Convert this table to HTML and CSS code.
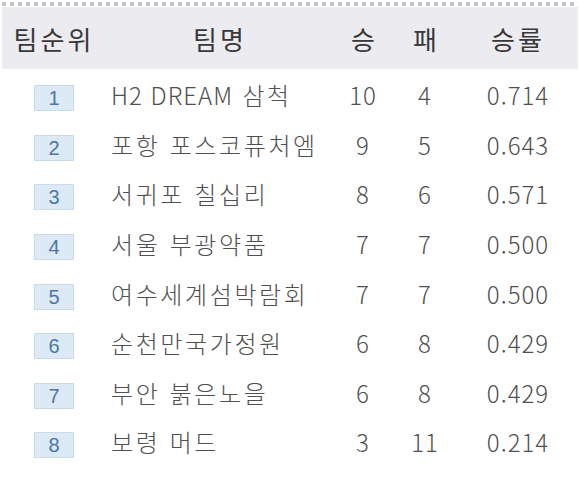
FILE: index.html
```html
<!DOCTYPE html>
<html lang="ko">
<head>
<meta charset="utf-8">
<link rel="stylesheet" href="styles.css">
</head>
<body>
<div class="wrap">
<table class="standings">
<colgroup>
<col class="c-rank"><col class="c-team"><col class="c-win"><col class="c-loss"><col class="c-pct">
</colgroup>
<thead>
<tr><th>팀순위</th><th>팀명</th><th>승</th><th>패</th><th>승률</th></tr>
</thead>
<tbody>
<tr><td><span class="badge">1</span></td><td class="team"><span class="latin">H2 DREAM</span> 삼척</td><td class="num">10</td><td class="num">4</td><td class="num">0.714</td></tr>
<tr><td><span class="badge">2</span></td><td class="team">포항 포스코퓨처엠</td><td class="num">9</td><td class="num">5</td><td class="num">0.643</td></tr>
<tr><td><span class="badge">3</span></td><td class="team">서귀포 칠십리</td><td class="num">8</td><td class="num">6</td><td class="num">0.571</td></tr>
<tr><td><span class="badge">4</span></td><td class="team">서울 부광약품</td><td class="num">7</td><td class="num">7</td><td class="num">0.500</td></tr>
<tr><td><span class="badge">5</span></td><td class="team">여수세계섬박람회</td><td class="num">7</td><td class="num">7</td><td class="num">0.500</td></tr>
<tr><td><span class="badge">6</span></td><td class="team">순천만국가정원</td><td class="num">6</td><td class="num">8</td><td class="num">0.429</td></tr>
<tr><td><span class="badge">7</span></td><td class="team">부안 붉은노을</td><td class="num">6</td><td class="num">8</td><td class="num">0.429</td></tr>
<tr><td><span class="badge">8</span></td><td class="team">보령 머드</td><td class="num">3</td><td class="num">11</td><td class="num">0.214</td></tr>
</tbody>
</table>
</div>
</body>
</html>
```
FILE: styles.css
```css
html, body {
  margin: 0;
  padding: 0;
  background: #ffffff;
}
.wrap {
  padding: 2px 2px 0 2px;
  width: 576px;
}
.wrap::before {
  content: "";
  display: block;
  height: 4px;
  background: repeating-linear-gradient(to right, #c4c4c8 0 4px, transparent 4px 8px);
}
.standings {
  width: 576px;
  border-collapse: collapse;
  table-layout: fixed;
  font-family: "Noto Sans CJK KR", "Noto Sans", sans-serif;
  font-weight: 300;
  color: #505050;
}
.c-rank { width: 104px; }
.c-team { width: 228px; }
.c-win { width: 58px; }
.c-loss { width: 66px; }
.c-pct { width: 120px; }
.standings th {
  height: 62px;
  padding: 0;
  background: #ececf0;
  font-size: 26px;
  letter-spacing: 3px;
  font-weight: 400;
  color: #383838;
  text-align: center;
  border-top: 1px solid #ffffff;
}
.standings th:nth-child(3),
.standings th:nth-child(4) {
  letter-spacing: 0;
}
.standings tbody tr:first-child td {
  padding-top: 1px;
}
.standings td {
  height: 49.6px;
  padding: 0;
  font-size: 24px;
  text-align: center;
  vertical-align: middle;
}
.standings td.num {
  letter-spacing: 1px;
}
.standings td.team {
  text-align: left;
  padding-left: 5px;
  letter-spacing: 2.6px;
}
.standings td.team .latin {
  letter-spacing: 1px;
}
.badge {
  display: inline-block;
  box-sizing: border-box;
  width: 40px;
  height: 26px;
  line-height: 24px;
  background: #dde9f5;
  border: 1px solid #c7dbed;
  color: #4a78a5;
  font-family: "Liberation Sans", sans-serif;
  font-size: 20px;
  font-weight: 400;
  text-align: center;
  letter-spacing: 0;
}
```
